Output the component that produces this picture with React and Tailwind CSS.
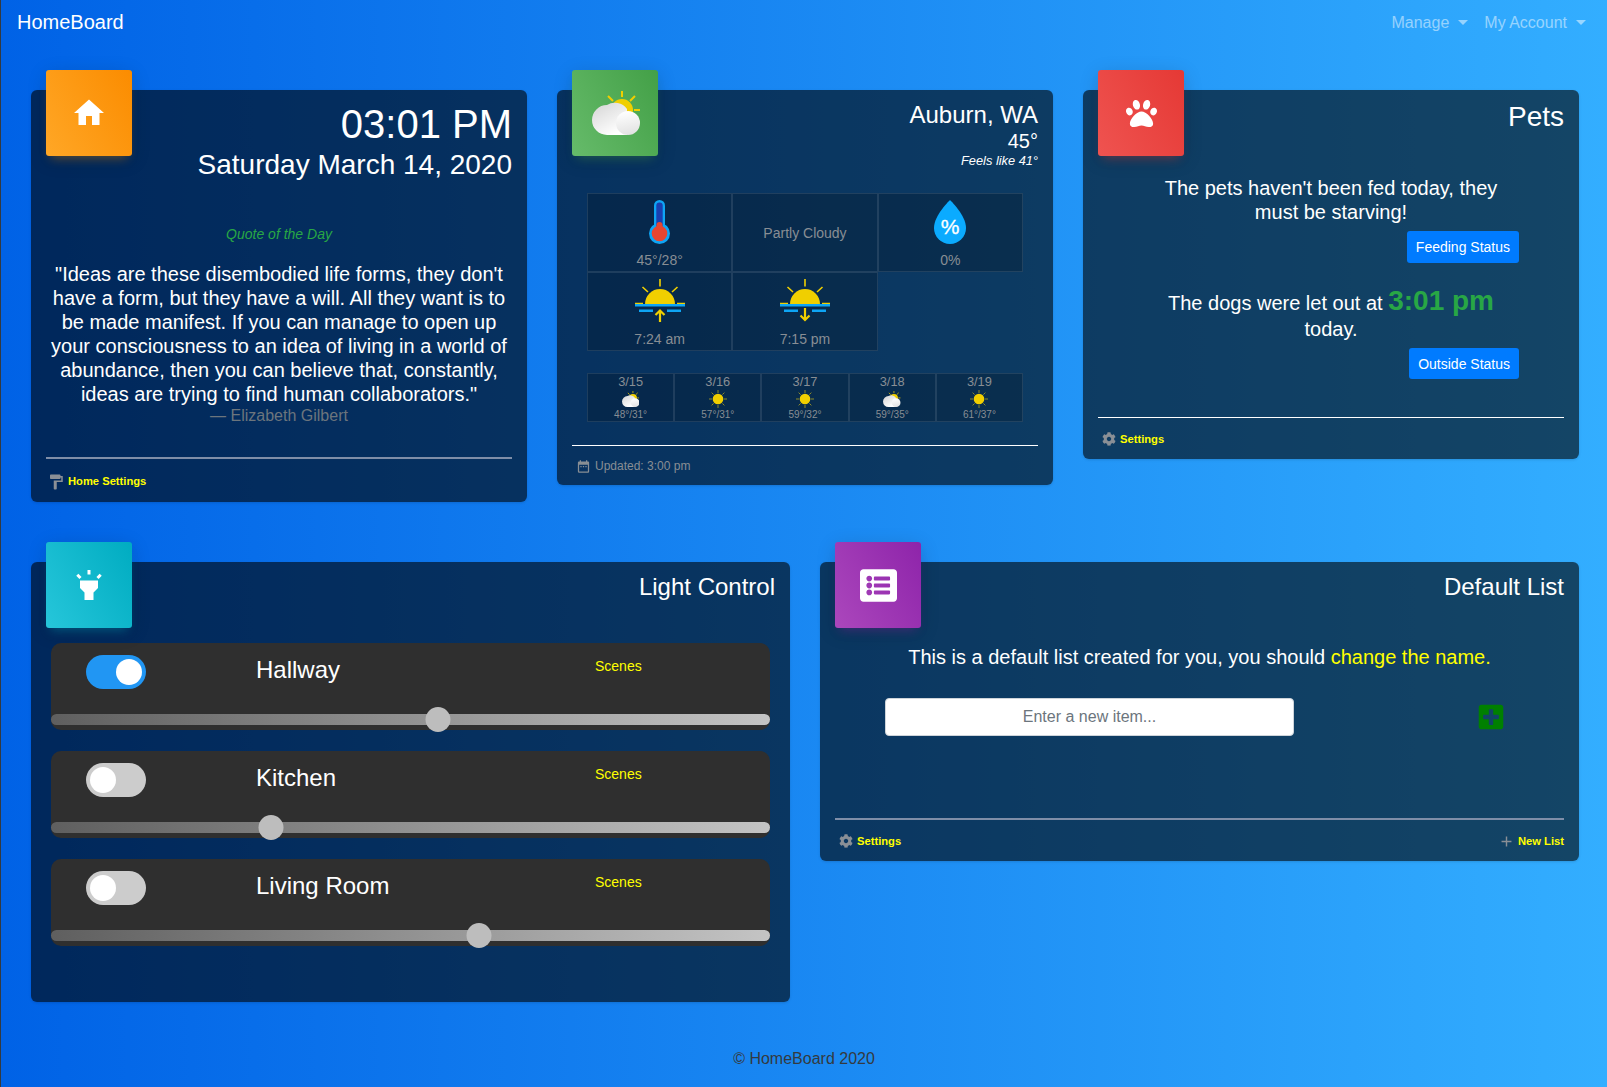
import { FaPaw, FaListAlt, FaPlusSquare, FaCog } from 'react-icons/fa';
import { MdHome, MdHighlight, MdDateRange, MdFormatPaint, MdAdd } from 'react-icons/md';

const rooms = [
  { name: 'Hallway', on: true, level: 387 },
  { name: 'Kitchen', on: false, level: 220 },
  { name: 'Living Room', on: false, level: 428 },
];

const forecast = [
  { date: '3/15', temps: '48°/31°', cloudy: true },
  { date: '3/16', temps: '57°/31°' },
  { date: '3/17', temps: '59°/32°' },
  { date: '3/18', temps: '59°/35°', cloudy: true },
  { date: '3/19', temps: '61°/37°' },
];

function PartlyCloudy({ className, id }) {
  return (
    <svg viewBox="0 0 48 44" className={className}>
      <defs>
        <linearGradient id={`${id}a`} x1="0" y1="0" x2="0.6" y2="1">
          <stop offset="0" stopColor="#d4d4d4" />
          <stop offset="1" stopColor="#ffffff" />
        </linearGradient>
        <linearGradient id={`${id}b`} x1="0.3" y1="0" x2="0.5" y2="1">
          <stop offset="0" stopColor="#ffffff" />
          <stop offset="1" stopColor="#e2e2e2" />
        </linearGradient>
      </defs>
      <g stroke="#f0cf00" strokeWidth="2" strokeLinecap="butt">
        <path d="M30 0v6M16 5l5 5M43 5l-5 5M42 19h6" />
      </g>
      <circle cx="30" cy="19" r="11" fill="#f0cf00" />
      <path d="M15 14a15 15 0 0 0 0 30h20v-26a15 15 0 0 0-20-4z" fill={`url(#${id}a)`} />
      <circle cx="36" cy="32" r="12" fill={`url(#${id}b)`} />
    </svg>
  );
}

function SmallSun() {
  return (
    <svg viewBox="0 0 18 18" className="h-[18px] w-[18px]">
      <g stroke="#8a8a2a" strokeWidth="1">
        <path d="M9 0v3M9 15v3M0 9h3M15 9h3M2.6 2.6l2 2M13.4 13.4l2 2M15.4 2.6l-2 2M4.6 13.4l-2 2" />
      </g>
      <circle cx="9" cy="9" r="5.3" fill="#f0cf00" />
    </svg>
  );
}

function Thermometer() {
  return (
    <svg viewBox="0 0 21 44" className="h-[44px] w-[21px]">
      <rect x="5" y="0" width="11" height="30" rx="5.5" fill="#0ea5f5" />
      <circle cx="10.5" cy="33.5" r="10.5" fill="#0ea5f5" />
      <rect x="7.3" y="2.5" width="6.4" height="26" rx="3" fill="#1a3fb0" />
      <circle cx="10.5" cy="33.5" r="7.8" fill="#e8452f" />
      <rect x="7.5" y="22" width="6" height="8" rx="3" fill="#e8452f" />
    </svg>
  );
}

function Drop() {
  return (
    <svg viewBox="0 0 32 44" className="h-[44px] w-[32px]">
      <path d="M16 0C16 0 32 15 32 28A16 16 0 0 1 0 28C0 15 16 0 16 0Z" fill="#0babff" />
      <text x="16" y="34" textAnchor="middle" fontSize="21" fill="#ffffff" stroke="#ffffff" strokeWidth="0.3" fontFamily="Liberation Sans">%</text>
    </svg>
  );
}

function SunHorizon({ down }) {
  return (
    <svg viewBox="0 0 50 43" className="h-[43px] w-[50px]">
      <g stroke="#f0cf00" strokeWidth="2.2" fill="none">
        <path d="M25 0v7.5M7.5 8l5.5 5M42.5 8l-5.5 5M0 24.5h8M42 24.5h8" strokeWidth="1.6" />
        {down ? <path d="M25 29v12M20.5 36.5l4.5 4.5 4.5-4.5" /> : <path d="M25 43V32M20.5 36l4.5-4.5 4.5 4.5" />}
      </g>
      <path d="M10 25a15 15 0 0 1 30 0z" fill="#f0cf00" />
      <path d="M0 25h50v2.4H0zM4 30.5h14V33H4zM32 30.5h14V33H32z" fill="#0ea5f5" />
    </svg>
  );
}

function CardIcon({ className, children }) {
  return (
    <div className={`absolute -top-5 left-[15px] flex h-[86px] w-[86px] items-center justify-center rounded-[3px] text-white ${className}`}>
      {children}
    </div>
  );
}

function CardFooter({ strong, children }) {
  return (
    <div className="mt-auto">
      {strong ? <div className="h-px bg-white" /> : <div className="h-[2px] bg-[#7f8ea8]" />}
      <div className="flex items-center justify-between pt-3 pb-[11px] pl-1 text-[11.2px] font-bold leading-[18px] text-[#ffff00]">
        {children}
      </div>
    </div>
  );
}

function ClockCard() {
  return (
    <section className="relative flex h-[412px] flex-col rounded-md bg-black/60 px-[15px] pt-[10px] shadow">
      <CardIcon className="bg-[linear-gradient(60deg,#ffa726,#fb8c00)] shadow-[0_4px_20px_0_rgba(0,0,0,0.14),0_7px_10px_-5px_rgba(255,152,0,0.4)]">
        <MdHome size={36} />
      </CardIcon>
      <div className="text-right text-[40px] leading-[48px] text-white">03:01 PM</div>
      <div className="text-right text-[28px] leading-[33.6px] text-white">Saturday March 14, 2020</div>
      <div className="mt-11 text-center text-sm italic leading-[17px] text-[#28a745]">Quote of the Day</div>
      <p className="mt-[19px] text-center text-xl leading-6 text-white">
        "Ideas are these disembodied life forms, they don't have a form, but they have a will. All they want is to be made manifest. If you can manage to open up your consciousness to an idea of living in a world of abundance, then you can believe that, constantly, ideas are trying to find human collaborators."
      </p>
      <div className="text-center text-base leading-[19px] text-[#6c757d]">— Elizabeth Gilbert</div>
      <CardFooter>
        <span className="flex items-center gap-[3px]">
          <MdFormatPaint size={18} className="-ml-[3px] mt-[2px] text-[#8a8f96]" />
          Home Settings
        </span>
      </CardFooter>
    </section>
  );
}

function WeatherCell({ label, children }) {
  return (
    <div className="flex h-[79px] flex-col items-center border border-white/10 bg-black/20 pt-[6px] text-sm text-[#888e94]">
      <div className="flex h-[46px] items-start">{children}</div>
      <div className="mt-[6px] leading-[17px]">{label}</div>
    </div>
  );
}

function WeatherCard() {
  return (
    <section className="relative flex h-[395px] flex-col rounded-md bg-black/60 px-[15px] pt-[10px] shadow">
      <CardIcon className="bg-[linear-gradient(60deg,#66bb6a,#43a047)] shadow-[0_4px_20px_0_rgba(0,0,0,0.14),0_7px_10px_-5px_rgba(76,175,80,0.4)]">
        <PartlyCloudy id="main" className="ml-[2px] h-[44px] w-[48px]" />
      </CardIcon>
      <div className="text-right text-2xl leading-[29px] text-white">Auburn, WA</div>
      <div className="text-right text-xl leading-6 text-white">45°</div>
      <div className="text-right text-[12.8px] italic leading-[16px] text-white">Feels like 41°</div>
      <div className="mx-[15px] mt-6 grid grid-cols-3">
        <WeatherCell label="45°/28°"><Thermometer /></WeatherCell>
        <div className="flex h-[79px] items-center justify-center border border-white/10 bg-black/20 text-sm text-[#888e94]">Partly Cloudy</div>
        <WeatherCell label="0%"><Drop /></WeatherCell>
        <WeatherCell label="7:24 am"><SunHorizon /></WeatherCell>
        <WeatherCell label="7:15 pm"><SunHorizon down /></WeatherCell>
      </div>
      <div className="mx-[15px] mt-[22px] grid grid-cols-5">
        {forecast.map((day) => (
          <div key={day.date} className="flex h-[49px] flex-col items-center border border-white/10 bg-black/20 text-[#888e94]">
            <div className="text-[12.8px] leading-[15px]">{day.date}</div>
            <div className="flex h-[20px] items-center">
              {day.cloudy ? <PartlyCloudy id={`d${day.date}`} className="h-[16px] w-[17.5px]" /> : <SmallSun />}
            </div>
            <div className="text-[10px] leading-[11px]">{day.temps}</div>
          </div>
        ))}
      </div>
      <CardFooter strong>
        <span className="flex items-center gap-1 text-xs font-normal text-[#888e94]">
          <MdDateRange size={15} />
          Updated: 3:00 pm
        </span>
      </CardFooter>
    </section>
  );
}

function PetsCard() {
  return (
    <section className="relative flex h-[369px] flex-col rounded-md bg-black/60 px-[15px] pt-[10px] shadow">
      <CardIcon className="bg-[linear-gradient(60deg,#ef5350,#e53935)] shadow-[0_4px_20px_0_rgba(0,0,0,0.14),0_7px_10px_-5px_rgba(244,67,54,0.4)]">
        <FaPaw size={31} />
      </CardIcon>
      <div className="text-right text-[28px] leading-[33.6px] text-white">Pets</div>
      <div className="mx-auto mt-[42px] flex w-[376px] flex-col">
        <p className="text-center text-xl leading-6 text-white">The pets haven't been fed today, they must be starving!</p>
        <button className="mt-[7px] h-8 self-end rounded-[3px] bg-[#007bff] px-[9px] text-sm text-white">Feeding Status</button>
        <p className="mt-[21px] text-center text-xl leading-6 text-white">
          The dogs were let out at <span className="text-[28px] font-bold leading-[33.6px] text-[#28a745]">3:01 pm</span> today.
        </p>
        <button className="mt-[7px] h-[31px] self-end rounded-[3px] bg-[#007bff] px-[9px] text-sm text-white">Outside Status</button>
      </div>
      <CardFooter strong>
        <span className="flex items-center gap-1">
          <FaCog size={14} className="text-[#8a8f96]" />
          Settings
        </span>
      </CardFooter>
    </section>
  );
}

function RoomRow({ room }) {
  return (
    <div className="h-[87px] rounded-[10px] bg-[#2f2f2f]">
      <div className="flex h-[71px] items-start pt-3 pl-[35px]">
        <div className={`flex h-[34px] w-[60px] shrink-0 items-center rounded-full px-1 ${room.on ? 'justify-end bg-[#2196f3]' : 'justify-start bg-[#cccccc]'}`}>
          <div className="h-[26px] w-[26px] rounded-full bg-white" />
        </div>
        <div className="ml-[110px] w-[339px] text-2xl leading-[29px] text-white">{room.name}</div>
        <div className="text-sm leading-[22px] text-[#ffff00]">Scenes</div>
      </div>
      <div className="relative h-[11px] rounded-full bg-[linear-gradient(to_right,#5f5f5f,#c4c4c4)]">
        <div
          className="absolute top-[-7px] h-[25px] w-[25px] -translate-x-1/2 rounded-full bg-[#bdbdbd]"
          style={{ left: room.level }}
        />
      </div>
    </div>
  );
}

function LightCard() {
  return (
    <section className="relative flex h-[440px] flex-col rounded-md bg-black/60 px-5 pt-[10px] shadow">
      <CardIcon className="bg-[linear-gradient(60deg,#26c6da,#00acc1)] shadow-[0_4px_20px_0_rgba(0,0,0,0.14),0_7px_10px_-5px_rgba(0,188,212,0.4)]">
        <MdHighlight size={36} />
      </CardIcon>
      <div className="-mr-[5px] text-right text-2xl leading-[29px] text-white">Light Control</div>
      <div className="mt-[42px] flex flex-col gap-[21px]">
        {rooms.map((room) => <RoomRow key={room.name} room={room} />)}
      </div>
    </section>
  );
}

function ListCard() {
  return (
    <section className="relative flex h-[299px] flex-col rounded-md bg-black/60 px-[15px] pt-[10px] shadow">
      <CardIcon className="bg-[linear-gradient(60deg,#ab47bc,#8e24aa)] shadow-[0_4px_20px_0_rgba(0,0,0,0.14),0_7px_10px_-5px_rgba(156,39,176,0.4)]">
        <FaListAlt size={37} />
      </CardIcon>
      <div className="text-right text-2xl leading-[29px] text-white">Default List</div>
      <p className="mt-11 text-center text-xl leading-6 text-white">
        This is a default list created for you, you should <span className="text-[#ffff00]">change the name.</span>
      </p>
      <div className="mt-[29px] ml-[50px] flex items-center">
        <input
          placeholder="Enter a new item..."
          className="h-[38px] w-[409px] rounded border border-[#ced4da] bg-white px-3 text-center text-base placeholder:text-[#6c757d]"
        />
        <FaPlusSquare size={28} className="ml-[183px] text-[#008000]" />
      </div>
      <CardFooter>
        <span className="flex items-center gap-1">
          <FaCog size={14} className="text-[#8a8f96]" />
          Settings
        </span>
        <span className="flex items-center gap-[3px]">
          <MdAdd size={17} className="text-[#8a8f96]" />
          New List
        </span>
      </CardFooter>
    </section>
  );
}

export default function App() {
  return (
    <div className="flex min-h-screen flex-col border-l border-[#343a40] bg-[linear-gradient(to_right,#0062e6,#33aeff)] font-['Liberation_Sans',Arial,sans-serif]">
      <nav className="flex h-11 items-center justify-between pr-[13px] pl-4">
        <a className="text-xl text-white">HomeBoard</a>
        <div className="flex items-center pt-px text-base text-white/50">
          {['Manage', 'My Account'].map((item) => (
            <a key={item} className="flex items-center gap-[9px] px-2">
              {item}
              <span className="h-0 w-0 border-x-[5px] border-t-[5px] border-x-transparent border-t-current" />
            </a>
          ))}
        </div>
      </nav>
      <main className="flex flex-col gap-[60px] pt-[46px] pr-[28px] pl-[30px]">
        <div className="grid grid-cols-3 items-start gap-[30px]">
          <ClockCard />
          <WeatherCard />
          <PetsCard />
        </div>
        <div className="grid grid-cols-2 items-start gap-[30px]">
          <LightCard />
          <ListCard />
        </div>
      </main>
      <footer className="mt-[45px] text-center text-base leading-6 text-[#343a40]">© HomeBoard 2020</footer>
    </div>
  );
}
